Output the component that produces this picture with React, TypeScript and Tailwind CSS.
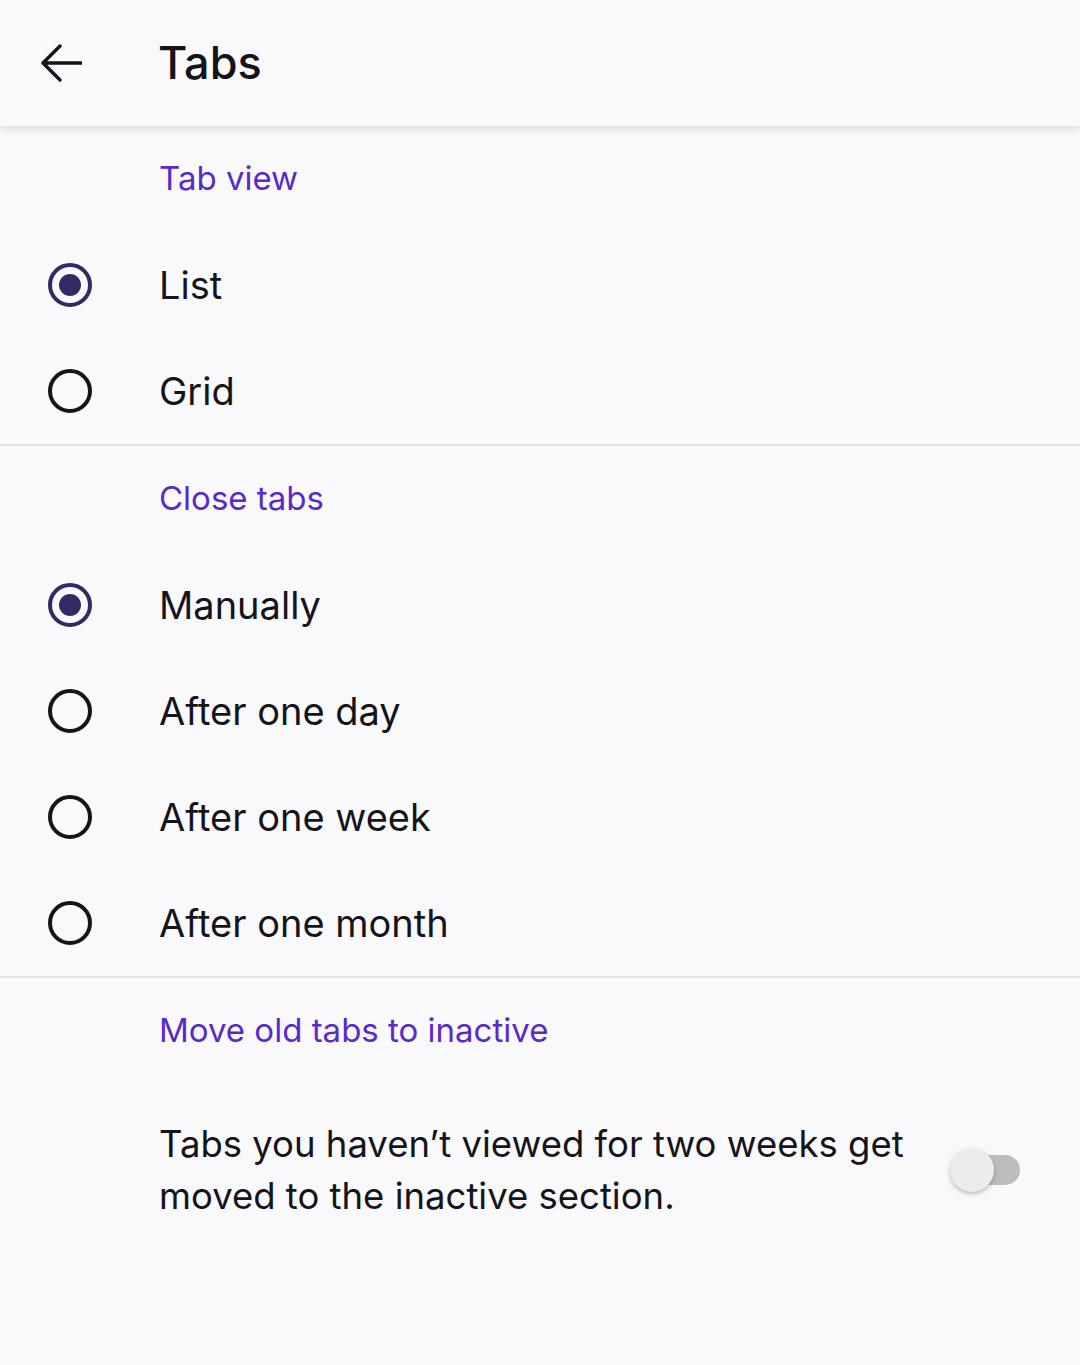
import React, { useState } from "react";

const font = { fontFamily: "Inter, 'Noto Sans', sans-serif" };

function Radio({ checked }: { checked: boolean }) {
  return (
    <div
      className={`flex h-[44px] w-[44px] items-center justify-center rounded-full border-[4.5px] ${
        checked ? "border-[#312a65]" : "border-[#15141a]"
      }`}
    >
      {checked && <div className="h-[22px] w-[22px] rounded-full bg-[#312a65]" />}
    </div>
  );
}

function SectionHeader({ title }: { title: string }) {
  return (
    <div className="flex h-[106px] items-center pl-[159px] text-[33px] text-[#592acb]">
      {title}
    </div>
  );
}

function RadioRow({ label, checked, onClick }: { label: string; checked: boolean; onClick: () => void }) {
  return (
    <div className="flex h-[106px] cursor-pointer items-center" onClick={onClick}>
      <div className="flex w-[159px] items-center pl-[48px]">
        <Radio checked={checked} />
      </div>
      <span className="text-[38px] text-[#15141a]">{label}</span>
    </div>
  );
}

export default function App() {
  const [view, setView] = useState("List");
  const [close, setClose] = useState("Manually");
  const [inactive, setInactive] = useState(false);

  return (
    <div className="min-h-[1365px] w-[1080px] bg-[#f9f9fb]" style={font}>
      <header className="relative z-10 flex h-[126px] items-center bg-[#f9f9fb] shadow-[0_3px_8px_rgba(0,0,0,0.12)]">
        <div className="flex w-[158px] items-center pl-[40px]">
          <svg width="42" height="38" viewBox="0 0 42 38" fill="none">
            <path
              d="M41 19H3M20 2L3 19L20 36"
              stroke="#15141a"
              strokeWidth="3.4"
              strokeLinecap="round"
              strokeLinejoin="round"
            />
          </svg>
        </div>
        <h1 className="text-[45px] font-medium text-[#15141a]">Tabs</h1>
      </header>

      <SectionHeader title="Tab view" />
      {["List", "Grid"].map((l) => (
        <RadioRow key={l} label={l} checked={view === l} onClick={() => setView(l)} />
      ))}
      <div className="h-[2px] bg-[#e2e2e7]" />

      <SectionHeader title="Close tabs" />
      {["Manually", "After one day", "After one week", "After one month"].map((l) => (
        <RadioRow key={l} label={l} checked={close === l} onClick={() => setClose(l)} />
      ))}
      <div className="h-[2px] bg-[#e2e2e7]" />

      <SectionHeader title="Move old tabs to inactive" />
      <div className="flex items-center pt-[34px] pl-[159px] pr-[60px]">
        <p className="flex-1 text-[36.5px] leading-[52px] text-[#15141a]">
          Tabs you haven’t viewed for two weeks get moved to the inactive section.
        </p>
        <button
          className="relative ml-[20px] h-[44px] w-[70px] shrink-0"
          onClick={() => setInactive(!inactive)}
        >
          <div className="absolute right-0 top-[7px] h-[30px] w-[58px] rounded-full bg-[#bdbdbd]" />
          <div className="absolute left-0 top-0 h-[44px] w-[44px] rounded-full bg-[#ececec] shadow-[0_2px_4px_rgba(0,0,0,0.25)]" />
        </button>
      </div>
    </div>
  );
}
